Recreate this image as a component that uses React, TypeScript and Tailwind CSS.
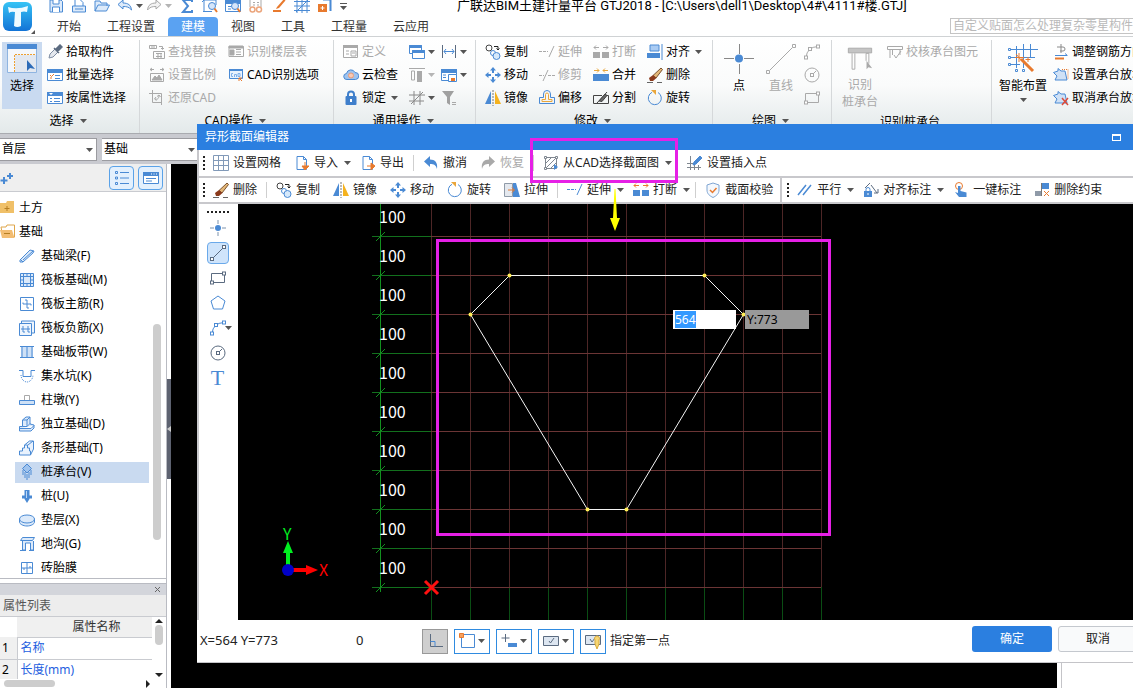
import { FC, ReactNode } from 'react';

const BLUE = '#4a8ad4';
const GRAY = '#a9a9a9';
const DARK = '#5b6b80';
const ORANGE = '#e87a2e';

//Drawings that more than one icon shares
const magnifier = (
    <g fill="none">
        <circle cx="10" cy="8" r="3.5" stroke={BLUE} fill="#d6e6fa" />
        <path d="M12.5 10.5L15 14" stroke={ORANGE} strokeWidth="2" />
    </g>
);
const page = <path d="M3 1.5h6.5l3 3v10h-9.5z M9.5 1.5v3h3" fill="#fff" stroke={BLUE} />;
const extend = (c: string) => (
    <g fill="none" stroke={c}>
        <path d="M0 7.5h9" strokeDasharray="3 1" />
        <path d="M10 13L15 2" />
    </g>
);
const breakBars = (c: string, a: string) => (
    <g>
        <path d="M0 8h7v6H0z M9 8h7v6H9z" fill={c} />
        <path d="M1 3.5h5 M3 1.5L1 3.5l2 2 M10 3.5h5 M13 1.5l2 2-2 2" fill="none" stroke={a} />
    </g>
);
const node = (x: number, y: number, c: string) => (
    <rect x={x - 1.5} y={y - 1.5} width="3" height="3" fill="#fff" stroke={c} />
);
const arc = (c: string) => (
    <g fill="none" stroke={c}>
        <path d="M2 13.5Q3 3 14 2.5" />
        {node(2, 13.5, c)}
        {node(6, 5, c)}
        {node(14, 2.5, c)}
    </g>
);
const circle = (c: string) => (
    <g fill="none" stroke={c}>
        <circle cx="8" cy="8" r="7" />
        <path d="M9 7l3-3" />
        {node(8, 8, c)}
    </g>
);
const rect = (c: string) => (
    <g fill="none" stroke={c}>
        <path d="M1.5 3.5h13v9h-13z" />
        {node(2, 12.5, c)}
        {node(14, 3.5, c)}
    </g>
);
const line = (c: string) => (
    <g fill="none" stroke={c}>
        <path d="M2 14L14 2" />
        {node(2, 14, c)}
        {node(14, 2, c)}
    </g>
);
const windowShape = (c: string) => (
    <g>
        <path d="M.5 2.5h15v11H.5z" fill="#fff" stroke={c} />
        <path d="M0 2h16v4H0z" fill={c} />
    </g>
);
const slope = (
    <path d="M.5 5.5L5 4V1.500l3 2.500h4l2 9H2l2-4z" fill="#cfe1f6" stroke={BLUE} />
);

const icons: Record<string, ReactNode> = {
    save: (
        <g fill="#dceafa" stroke={BLUE}>
            <path d="M2 2h11l1.500 1.500V14H2z" />
            <path d="M5 2v4h6V2 M4.500 14V9h7v5" fill="#fff" />
        </g>
    ),
    file: (
        <g fill="#fff" stroke={BLUE}>
            <path d="M4 8V1.500h5l3 3V8" />
            <path d="M1.500 8h13v6h-13z" fill="#dceafa" />
            <path d="M4 11h8" />
        </g>
    ),
    open: <path d="M1 13V3h5l1 2h6v3 M1 13l3-6h11.500l-3 6z" fill="#dceafa" stroke={BLUE} />,
    undoOutline: <path d="M1 6.500L6 2v3c5 0 8 2 8.500 7C12 9 10 8.500 6 8.500V11z" fill="#dceafa" stroke={BLUE} />,
    redoOutline: <path d="M15 6.500L10 2v3c-5 0-8 2-8.500 7C4 9 6 8.500 10 8.500V11z" fill="#f3f3f3" stroke={GRAY} />,
    sigma: <path d="M13 4V2H4l5 6-5 6h9v-2" fill="none" stroke={BLUE} strokeWidth="2" />,
    preview: (
        <g>
            <path d="M2 13.500V2h12v5 M1 13.500h9 M2 2L0 4" fill="none" stroke={BLUE} />
            {magnifier}
        </g>
    ),
    find: (
        <g>
            {windowShape(BLUE)}
            <path d="M3 8.500h3 M3 11h3" stroke={BLUE} />
            {magnifier}
        </g>
    ),
    link: (
        <g fill="none" stroke={GRAY}>
            <path d="M2 9V1.500h11V9 M5 4.500h2 M9 4.500h2 M5 7h2 M9 7h2" />
            <circle cx="4.500" cy="11.500" r="2.500" stroke="#eba57c" strokeWidth="1.500" />
            <circle cx="11" cy="11.500" r="2.500" stroke="#eba57c" strokeWidth="1.500" />
        </g>
    ),
    edit: (
        <g fill="none">
            <path d="M6 9L13 1l1.500 1.500L8 10l-3 1z" fill={ORANGE} />
            <path d="M2 13h8" stroke={ORANGE} strokeWidth="2" />
        </g>
    ),
    hatch: <path d="M3 1v14 M8 1v14 M13 1v14 M0 3.500h16 M0 8h16 M0 12.500h16 M2 14L14 2" fill="none" stroke={BLUE} />,
    addCorner: (
        <g>
            <path d="M6 1.500h7.500V13" fill="none" stroke={BLUE} strokeWidth="2" />
            <path d="M1 6h9v8H1z" fill={ORANGE} />
            <path d="M5.500 8v4 M3.500 10h4" stroke="#fff" />
        </g>
    ),
    dropper: (
        <g>
            <path d="M2 14l1-4 5-5 3 3-5 5z" fill="#e4e8ee" stroke="#7e8da3" />
            <path d="M7 4l5 5 M9 5l4-4 2 2-4 4z" fill={DARK} stroke={DARK} strokeWidth="1.500" />
        </g>
    ),
    batch: (
        <g>
            {windowShape(BLUE)}
            <path d="M3 8l1.500 1.500L7 7 M3 11h2" fill="none" stroke={ORANGE} />
            <path d="M8 8.500h5 M8 11.500h5" stroke={BLUE} />
        </g>
    ),
    property: (
        <g>
            {windowShape(BLUE)}
            <path d="M2 3l2 2 2-2z" fill="#fff" />
            <path d="M3 8.500h2 M3 11.500h2 M7 8.500h6 M7 11.500h6" stroke={BLUE} />
        </g>
    ),
    replace: (
        <g fill="none" stroke={GRAY}>
            <path d="M.5 1.500h7v3h-7z M3 1.500v3 M5 1.500v3 M10 2.500h3.500v2.500 M12 4l1.500 1.500L15 4 M4.500 7.500h11v7h-11z" />
            <path d="M7 9.500h6 M7 12.500h6 M9 9v5 M12 9v5" />
        </g>
    ),
    scale: (
        <g fill="none" stroke={GRAY}>
            <path d="M1 2.500h4 M11 2.500h4 M3 1L1 2.500 3 4 M13 1l2 1.500L13 4 M1.500 6.500h13v8h-13z" />
            <path d="M3 13l3-4 2 2 2-3 3 5z" fill={GRAY} />
        </g>
    ),
    restore: (
        <path d="M3.500 0v12.500H12 M0 3.500h12.500V15 M6 9c3 1 4-1 4-4 M8 6.500L10 5l1.500 2 M7 7L5.500 9l2 1.500" fill="none" stroke={GRAY} />
    ),
    floors: (
        <g fill="none" stroke={GRAY}>
            <path d="M1 2.500h14.500v10H1z M8 5.500h5 M8 8h5 M8 10.500h5" />
            <path d="M1 2h14v2H1z M2 6h4v5H2z" fill={GRAY} />
        </g>
    ),
    cad: (
        <g>
            <path d="M1.500 2.500h13v9h-13z" fill="#e9f2fd" stroke={BLUE} />
            <path d="M1 2h14v2H1z" fill={BLUE} />
            <path d="M5 6.500H3.500v3H5 M6.500 10V7.500h2V10 M10 6.500v3h2v-3z" fill="none" stroke="#7fb0ea" />
            <path d="M11 11l3 3 M11 14v-3h3" stroke={ORANGE} fill="none" />
        </g>
    ),
    define: (
        <g>
            <path d="M.5 1.500h14v12H.5z" fill="#fff" stroke={GRAY} />
            <path d="M0 1h15v3H0z" fill={GRAY} />
            <path d="M3 7h3 M3 10h3 M8 7h5v5H8z M9 9h3" stroke={GRAY} fill="none" />
        </g>
    ),
    cloud: (
        <g>
            <path d="M4 12.500a3 3 0 0 1-.5-6 4.500 4.500 0 0 1 8.500-1 3.500 3.500 0 0 1 .5 7z" fill="#9fc3ee" stroke={BLUE} />
            <circle cx="8" cy="8.500" r="2.500" fill="#f7c9b4" stroke="#e79a78" />
        </g>
    ),
    lock: (
        <g>
            <path d="M5 7V4.500a3 3 0 0 1 6 0V7" fill="none" stroke="#3f7fcb" strokeWidth="2" />
            <rect x="2.500" y="6" width="11" height="9" rx="1" fill="#3f7fcb" />
            <path d="M8 9v3" stroke="#fff" strokeWidth="2" />
        </g>
    ),
    stack: (
        <g stroke={BLUE} fill="#fff">
            <path d="M.5 1.500h12v8H.5z" />
            <path d="M.5 1.500h12v2H.5z" fill={BLUE} />
            <path d="M3.500 6.500h12v8h-12z" />
            <path d="M3.500 6.500h12v2h-12z" fill={BLUE} />
        </g>
    ),
    columns: (
        <g>
            <path d="M0 1.500h16 M2.500 4v9h3V4z" stroke={GRAY} fill="none" />
            <path d="M8 4h5v11H8z" fill={GRAY} />
        </g>
    ),
    crossHatch: <path d="M5 1v14 M0 5h16 M11 1v14 M0 11h15 M2 14L14 2" fill="none" stroke="#8a8a8a" />,
    width: (
        <g fill="none" stroke={BLUE}>
            <path d="M1.500 1v13 M14.500 1v13" stroke={DARK} />
            <path d="M3 7.500h10 M5 5L3 7.500 5 10 M11 5l2 2.500-2 2.500" />
        </g>
    ),
    layers: (
        <g>
            {windowShape(BLUE)}
            <path d="M2 8h3 M2 10.500h3" stroke={BLUE} />
            <path d="M7.500 7.500h8v7h-8z" fill="#fff" stroke={BLUE} />
            <path d="M10 11h4v3h-4z" fill={ORANGE} />
        </g>
    ),
    filter: (
        <g>
            <path d="M1 1h12L9 7v8l-3-2V7z" fill="#a0a0a0" />
            <path d="M11 12.500h4 M11 14.500h4" stroke={GRAY} />
        </g>
    ),
    copy: (
        <g fill="none">
            <circle cx="4" cy="4" r="3" stroke="#444" />
            <path d="M9 2.500h4v3 M11.500 4.500L13 6l1.500-1.500" stroke="#222" />
            <circle cx="8" cy="9" r="2.500" stroke={BLUE} />
            <circle cx="11.500" cy="12" r="3.500" fill="#d6e9fb" stroke={BLUE} />
        </g>
    ),
    move: (
        <g fill={BLUE}>
            <path d="M8 0l3 3.500H5z M8 16l3-3.500H5z M0 8l3.500-3v6z M16 8l-3.500-3v6z" />
            <path d="M8 3v3 M8 10v3 M3 8h3 M10 8h3" stroke={BLUE} strokeWidth="2" />
        </g>
    ),
    mirror: (
        <g>
            <path d="M6 1v13H0z" fill={BLUE} />
            <path d="M10 1v13h6z" fill="#f5b21e" />
            <path d="M8 0v16" stroke="#777" strokeDasharray="2 1" />
        </g>
    ),
    extendGray: extend(GRAY),
    extend: extend(BLUE),
    trim: (
        <g fill="none" stroke={GRAY}>
            <path d="M0 8.500h5 M9 8.500h7" strokeDasharray="3 1" />
            <path d="M4 14L9 3" />
        </g>
    ),
    offset: (
        <g fill="none">
            <path d="M4.500 7.500V4a3.500 3.500 0 0 1 7 0v3.500h4v6H.5v-6z" stroke={BLUE} />
            <path d="M6.500 9.500V4.500a1.500 1.500 0 0 1 3 0v5h3.500v2H3v-2z" stroke="#e9a63b" />
        </g>
    ),
    breakGray: breakBars(GRAY, GRAY),
    breakBlue: breakBars(BLUE, ORANGE),
    merge: (
        <g>
            <path d="M0 7h16v7H0z" fill={BLUE} />
            <path d="M1 3.500h5 M4 1.500l2 2-2 2 M10 3.500h5 M12 1.500l-2 2 2 2" fill="none" stroke="#e9a63b" />
        </g>
    ),
    split: (
        <g fill="none" stroke="#444">
            <path d="M9 5.500H.5v8h15v-8H13 M4 13l10-11" />
            <path d="M6 11l6-7 2 1.500-5 6z" fill="#666" />
        </g>
    ),
    align: (
        <g>
            <path d="M3 1h9v6H3z" fill="#a9cbf3" stroke={BLUE} />
            <path d="M0 9h13v5H0z" fill={BLUE} />
            <path d="M15 0v16" stroke={BLUE} />
        </g>
    ),
    erase: (
        <g>
            <path d="M0 15.500h6 M10 15.500h5" stroke="#666" />
            <path d="M14 1l1.500 1.500L9 11l-3-2.500z" fill="#e4b878" stroke="#7a5230" />
            <path d="M6 8l3.500 3L6 14H3l-1-3z" fill="#8b3a1c" />
        </g>
    ),
    rotate: (
        <g fill="none">
            <path d="M11 2.500a6.500 6.500 0 1 1-6-.2" stroke={BLUE} />
            <path d="M4 0h5v5z" fill="#e9a63b" />
        </g>
    ),
    pileTable: (
        <g fill="none" stroke={GRAY}>
            <path d="M.5 2.500h15v3H.5z M3 6v8 M5.500 6v5 M13 6v5" />
            <path d="M7 11l2 3 5-7" />
        </g>
    ),
    rebarDir: (
        <g fill="none">
            <path d="M8 0v9 M4 3h6a2 2 0 0 1 0 4H7" stroke="#8a8a8a" />
            <path d="M2 11.500h12 M12 9.500l2.500 2" stroke={BLUE} />
            <path d="M2 14.500h9" stroke={ORANGE} strokeWidth="2" />
        </g>
    ),
    slopeSet: (
        <g>
            {slope}
            <path d="M9 2.500h6v10" fill="none" stroke={ORANGE} strokeDasharray="1 1" />
        </g>
    ),
    slopeCancel: (
        <g>
            {slope}
            <path d="M9 8l6 7 M15 8l-6 7" stroke="#dd4b39" strokeWidth="1.500" />
        </g>
    ),
    arcGray: arc(GRAY),
    circleGray: circle(GRAY),
    rectGray: rect(GRAY),
    arc: arc(BLUE),
    circle: circle(DARK),
    rect: rect(DARK),
    line: line(DARK),
    point: (
        <g>
            <path d="M8 0v4 M8 12v4 M0 8h4 M12 8h4" stroke="#7d93ad" />
            <circle cx="8" cy="8" r="3" fill={BLUE} />
        </g>
    ),
    polygon: <path d="M8 1l7 5-2.500 8h-9L1 6z" fill="none" stroke={BLUE} />,
    grid: <path d="M.5.5h15v15H.5z M5.500.5v15 M10.500.5v15 M.5 5.500h15 M.5 10.500h15" fill="none" stroke="#8199b8" />,
    importFile: (
        <g>
            {page}
            <path d="M11 7v5 M8 11l3 4 4-4z" fill={ORANGE} stroke={ORANGE} />
        </g>
    ),
    exportFile: (
        <g>
            {page}
            <path d="M7 11h5 M11 8l4 3-4 4z" fill={ORANGE} stroke={ORANGE} />
        </g>
    ),
    undo: <path d="M1 6.500L7 1v3.500c5 0 8 3 7 9.500-1-4-3-5-7-5V12z" fill={BLUE} />,
    redo: <path d="M15 6.500L9 1v3.500c-5 0-8 3-7 9.500 1-4 3-5 7-5V12z" fill={GRAY} />,
    cadSelect: (
        <g stroke="#7f8790" fill="none">
            <path d="M2.500 2.500h11v11h-11z M3 8l5-5 M3 13L13 3 M8 13l5-5" />
            <path d="M1.500 1.500h2v2h-2z M12.500 1.500h2v2h-2z M1.500 12.500h2v2h-2z" fill="#fff" />
            <path d="M11 9v6l4-3z" fill={BLUE} stroke="none" />
        </g>
    ),
    insertPoint: (
        <g fill="none" stroke="#7f8790">
            <path d="M3.500 1v14 M0 12.500h14 M0 8.500h6 M7.500 9v6 M11.500 10v5" />
            <path d="M7 7l6-6 2 2-6 6-3 1z" fill={BLUE} stroke={BLUE} />
        </g>
    ),
    stretch: (
        <g>
            <path d="M.5 1.500h8v13h-8z" fill="#e4e8ee" stroke="#8f9aa8" />
            <path d="M9 1h3l4 14H9z" fill={BLUE} />
            <path d="M4 8h6 M8 5.500L10.500 8 8 10.500" stroke={ORANGE} fill="none" />
        </g>
    ),
    shield: (
        <g fill="none">
            <path d="M8 1l6 2v5c0 4-3 6-6 7.500C5 14 2 12 2 8V3z" stroke="#7fa5d3" fill="#f4f8fd" />
            <path d="M5 8l2.500 2.500L11.500 6" stroke={ORANGE} strokeWidth="1.500" />
        </g>
    ),
    parallel: <path d="M1 13L9 3 M6 13l8-10" fill="none" stroke={BLUE} strokeWidth="1.500" />,
    alignMark: (
        <g fill="none" stroke={DARK}>
            <path d="M2 6l5-5 M8 3l6 8 M11 11h4V7" />
            <path d="M3 9V7.500a2 2 0 0 1 4 0V9" stroke={BLUE} />
            <path d="M1 9h8v6H1z" fill={BLUE} stroke="none" />
            <path d="M5 11v2" stroke="#fff" />
        </g>
    ),
    touch: (
        <g>
            <circle cx="6" cy="4" r="3.500" fill="none" stroke={ORANGE} />
            <path d="M5 4h2.500v5l6 1.500V15H6l-4-5 3 1z" fill={BLUE} />
        </g>
    ),
    removeConstraint: (
        <g>
            <path d="M1 9h6v5H1z" fill="#8f9aa8" />
            <path d="M8 1h7v6H8z" fill={BLUE} />
            <path d="M7.500 1v13" stroke="#777" />
            <path d="M10 9l5 5 M15 9l-5 5" stroke={ORANGE} />
        </g>
    ),
    beam: <path d="M1 12L11 2l4 1-1 2L4 14H1z M2 12l2 2 M4 12L14 3" fill="#dceafa" stroke={BLUE} />,
    raft: <path d="M1.500 1.500h13v13h-13z M4.500 4.500h7v7h-7z M1 4.500h14 M1 8h3 M12 8h3 M1 11.500h14 M4.500 1v14 M8 1v3 M8 12v3 M11.500 1v14" fill="#dceafa" stroke={BLUE} />,
    raftMain: <path d="M1.500 1.500h13v13h-13z M8 4v8 M4 8h8 M6 4h2 M8 12h2 M4 8v-1.500 M12 8v1.500" fill="#fff" stroke={BLUE} />,
    raftNeg: <path d="M.5 3.500h12v12H.5z M2.500 3V1h13v12H13 M4 6v6 M9 6v6 M2 9h9 M4 12h2 M9 12h2" fill="#eef5fd" stroke={BLUE} />,
    strip: (
        <g>
            <path d="M2 3h12v10H2z" fill="#cfe1f6" />
            <path d="M1 2.500h14 M1 13.500h14 M3 3v10 M8 3v10 M13 3v10" stroke={BLUE} fill="none" />
        </g>
    ),
    pit: (
        <g fill="none" stroke={BLUE}>
            <path d="M0 2.500h4v6h8v-6h4" />
            <path d="M2 7c0 4 3 7 6 7s6-3 6-7" strokeDasharray="1 1" />
        </g>
    ),
    pier: (
        <g>
            <path d="M5.500 8V3.500h5V8" fill="#fff" stroke={GRAY} />
            <path d="M.5 8.500h15v4H.5z" fill="#cfe1f6" stroke={BLUE} />
        </g>
    ),
    footing: <path d="M.5 10.500h3V4L7 1h4v7l4 1v3l-3 3H.5z M3.500 10.500H8l3-3 M8 10.500V4l3-3 M3.500 4H8 M.5 12.500H12l3-3" fill="#dceafa" stroke={BLUE} />,
    stripFooting: <path d="M.5 15v-4h3V8h2V5l5-4h4v8l-3 6z M5.500 5h3v3h2v3h1v4 M9 5l5-4" fill="#e9f2fd" stroke={BLUE} />,
    pileCap: (
        <g stroke={BLUE}>
            <path d="M4 6v5 M8 10v6 M12 6v5 M6 8v6 M10 8v6" fill="none" />
            <path d="M8 0l4.500 4.500L8 9 3.500 4.500z" fill="#9fc3ee" />
        </g>
    ),
    pile: (
        <g fill={BLUE}>
            <path d="M5.500 2h5v9L8 15l-2.500-4z" />
            <path d="M3 9h10" stroke={BLUE} strokeWidth="3" />
            <path d="M7.500 3v7" stroke="#bcd7f5" />
        </g>
    ),
    cushion: (
        <g fill="#dceafa" stroke={BLUE}>
            <path d="M.5 7v3c0 2 3.500 4 7.500 4s7.500-2 7.500-4V7z" />
            <ellipse cx="8" cy="7" rx="7.500" ry="4" />
        </g>
    ),
    trench: <path d="M3.500 1.500h12l-2 3H1.500z M3.500 5v9h3V7h5v7h3V5 M1 14.500h6 M10 14.500h5" fill="#dceafa" stroke={BLUE} />,
    brickMold: <path d="M2.500 2.500h11v11h-11z M8 2.500v11 M2 8h12 M5 8v2 M11 6v2" fill="#fff" stroke={BLUE} />,
    folderClosed: (
        <g>
            <path d="M0 3h6l1-2h7v12H0z" fill="#f0c068" />
            <path d="M7 6v5 M4.500 8.500h5" stroke="#b67e22" />
        </g>
    ),
    folderOpen: (
        <g>
            <path d="M1 3h5l1-2h7.500v12H3z" fill="#fff" stroke="#dfa64a" />
            <path d="M0 6h12l2.500 8H2z" fill="#f3bd72" />
            <path d="M4 9.500h6" stroke="#b67e22" />
        </g>
    ),
    listView: (
        <g stroke={BLUE} fill="none">
            <path d="M1.500 1.500h2v2h-2z M1.500 7h2v2h-2z M1.500 12.500h2v2h-2z" />
            <path d="M6 2.500h9 M6 8h9 M6 13.500h9" />
        </g>
    ),
    cardView: (
        <g>
            {windowShape(BLUE)}
            <path d="M8 4h1 M10.500 4h1 M13 4h1" stroke="#fff" />
            <path d="M3 8.500h10 M3 11h6" stroke={BLUE} />
        </g>
    ),
    addPair: <path d="M4 7v7 M.5 10.500h7 M10 3v6 M7 6h6" stroke={BLUE} strokeWidth="2" fill="none" />,
    ortho: (
        <g fill="none">
            <path d="M3.500 1v12.500H16" stroke={DARK} />
            <path d="M3.500 8.500H8v5" stroke={BLUE} />
        </g>
    ),
    snapRect: (
        <g>
            <path d="M2.500 1.500h13v13h-13z" fill="#fff" stroke={BLUE} />
            <path d="M.5.5h4v4h-4z" fill="#f5a05f" stroke={ORANGE} />
        </g>
    ),
    snapPlus: (
        <g>
            <path d="M4.500 1v8 M.5 5h8" stroke={DARK} />
            <path d="M7 10h9v4H7z" fill={BLUE} />
        </g>
    ),
    snapCheck: (
        <g fill="none">
            <path d="M.5 3.500h15v9H.5z" fill="#dde6f1" stroke={DARK} />
            <path d="M6 8l1.500 2L11 5" stroke={DARK} />
        </g>
    ),
    snapHint: (
        <g fill="none">
            <path d="M.5 2.500h15v9H.5z" fill="#dde6f1" stroke={DARK} />
            <path d="M5 6l2 3 3-4" stroke={DARK} />
            <path d="M10 7a2.500 2.500 0 1 1 4 0v4l-2 5-2-5z" fill="#f7d774" stroke="#d9a93a" />
        </g>
    ),
};

const Icon: FC<{ name: string }> = ({ name }) => (
    <svg viewBox="0 0 16 16" className="size-4 shrink-0" aria-hidden="true">
        {icons[name]}
    </svg>
);

const Caret: FC<{ muted?: boolean }> = ({ muted }) => (
    <svg viewBox="0 0 7 4" className="h-1 w-[7px] shrink-0" aria-hidden="true">
        <path d="M0 0h7L3.500 4z" fill={muted ? '#b5b5b5' : '#555'} />
    </svg>
);

interface ItemProps {
    icon: string;
    label?: string;
    disabled?: boolean;
    caret?: boolean;
}

const RibbonItem: FC<ItemProps> = ({ icon, label, disabled, caret }) => (
    <button
        disabled={disabled}
        aria-label={label ?? icon}
        className="flex h-[23px] items-center gap-[3px] whitespace-nowrap text-black disabled:text-[#a9a9a9]"
    >
        <Icon name={icon} />
        {label && <span className="mr-[2px]">{label}</span>}
        {caret && <Caret muted={disabled} />}
    </button>
);

const Column: FC<{ items: ItemProps[] }> = ({ items }) => (
    <div className="flex flex-col items-start">
        {items.map((item) => (
            <RibbonItem key={item.icon} {...item} />
        ))}
    </div>
);

interface GroupProps {
    title?: string;
    caret?: boolean;
    className: string;
    children: ReactNode;
}

const Group: FC<GroupProps> = ({ title, caret, className, children }) => (
    <section className={`flex shrink-0 flex-col border-r border-[#d5d8da] ${className}`}>
        <div className="flex h-[70px]">{children}</div>
        <div className="flex h-6 items-center justify-center gap-[6px] pr-[3px] text-black">
            <span>{title}</span>
            {caret && <Caret />}
        </div>
    </section>
);

const tabs = ['开始', '工程设置', '建模', '视图', '工具', '工程量', '云应用'];

const Header: FC = () => (
    <header className="flex h-[37px] shrink-0 border-b border-[#cfd2d4] bg-white">
        <div className="flex w-11 shrink-0 items-end">
            <svg viewBox="0 0 40 37" className="h-[37px] w-10" aria-label="GTJ">
                <defs>
                    <linearGradient id="logo" x1="0" y1="0" x2="0" y2="1">
                        <stop offset="0" stopColor="#36c3f5" />
                        <stop offset="1" stopColor="#1273d6" />
                    </linearGradient>
                </defs>
                <rect x="3" y="3" width="29" height="29" rx="6" fill="url(#logo)" />
                <path d="M8 8q9 3 20-1l-1 6q-3-1-6 0v14q-4 2-7 0l1-14q-4-1-6 1z" fill="#eefaff" />
                <path d="M35 31v4h-4z" fill="#555" />
            </svg>
        </div>
        <div className="flex min-w-0 grow flex-col justify-between">
            <div className="flex h-3 items-center">
                <div className="flex w-[413px] shrink-0 items-center gap-[7px] pl-1">
                    <Icon name="save" />
                    <Icon name="file" />
                    <Icon name="open" />
                    <div className="flex items-center gap-[3px]">
                        <Icon name="undoOutline" />
                        <Caret />
                        <Icon name="redoOutline" />
                        <Caret muted />
                    </div>
                    <Icon name="sigma" />
                    <Icon name="preview" />
                    <Icon name="find" />
                    <Icon name="link" />
                    <Icon name="edit" />
                    <Icon name="hatch" />
                    <Icon name="addCorner" />
                    <div className="flex flex-col gap-[2px]">
                        <div className="h-px w-[7px] bg-[#555]" />
                        <Caret />
                    </div>
                </div>
                <h1 className="whitespace-nowrap font-[Roboto,'Noto_Sans_CJK_SC',sans-serif] text-[13px] leading-3 text-black">
                    广联达BIM土建计量平台 GTJ2018 - [C:\Users\dell1\Desktop\4#\4111#楼.GTJ]
                </h1>
            </div>
            <div className="flex items-end justify-between">
                <nav className="flex">
                    {tabs.map((tab) => (
                        <button
                            key={tab}
                            className={
                                tab === '建模'
                                    ? 'h-[19px] rounded-t-sm bg-[#5aa2f2] px-[13px] text-white'
                                    : 'h-[19px] px-[13px] text-[#333]'
                            }
                        >
                            {tab}
                        </button>
                    ))}
                </nav>
                <input
                    aria-label="搜索"
                    placeholder="自定义贴面怎么处理复杂零星构件的装修"
                    className="mb-[2px] h-4 w-[183px] border border-r-0 border-[#c4c4c4] pl-[2px] placeholder:text-[#b9b9b9]"
                />
            </div>
        </div>
    </header>
);

const Ribbon: FC = () => (
    <div className="flex h-24 shrink-0 overflow-hidden bg-linear-to-b from-white via-[#fafbfb] to-[#e3e9ea] pt-[3px]">
        <Group title="选择" caret className="w-[140px]">
            <button className="ml-[2px] mt-[2px] flex h-[67px] w-10 flex-col items-center bg-[#c9daf0] pt-[2px] text-black">
                <svg viewBox="0 0 30 30" className="size-[30px]" aria-hidden="true">
                    <path d="M.5.5h29v28H.5z" fill="#f4f7fb" stroke="#8fb4e0" />
                    <path d="M0 0h30v5H0z" fill={BLUE} />
                    <path d="M8 11h21v17H8z" fill="#e3e8f0" />
                    <path d="M7.500 28V10.500H29" fill="none" stroke="#efa02f" strokeDasharray="2 1" />
                    <path d="M20 16v11l3-3 5 1z" fill="#2e6cb8" />
                </svg>
                <span className="mt-1">选择</span>
            </button>
            <div className="ml-[5px]">
                <Column
                    items={[
                        { icon: 'dropper', label: '拾取构件' },
                        { icon: 'batch', label: '批量选择' },
                        { icon: 'property', label: '按属性选择' },
                    ]}
                />
            </div>
        </Group>
        <Group title="CAD操作" caret className="w-[194px]">
            <div className="ml-[9px] flex gap-[10px]">
                <Column
                    items={[
                        { icon: 'replace', label: '查找替换', disabled: true },
                        { icon: 'scale', label: '设置比例', disabled: true },
                        { icon: 'restore', label: '还原CAD', disabled: true },
                    ]}
                />
                <Column
                    items={[
                        { icon: 'floors', label: '识别楼层表', disabled: true },
                        { icon: 'cad', label: 'CAD识别选项' },
                    ]}
                />
            </div>
        </Group>
        <Group title="通用操作" caret className="w-[142px]">
            <div className="ml-[9px] flex gap-[10px]">
                <Column
                    items={[
                        { icon: 'define', label: '定义', disabled: true },
                        { icon: 'cloud', label: '云检查' },
                        { icon: 'lock', label: '锁定', caret: true },
                    ]}
                />
                <div className="-ml-px flex gap-[6px]">
                    <Column
                        items={[
                            { icon: 'stack', caret: true },
                            { icon: 'columns', caret: true, disabled: true },
                            { icon: 'crossHatch', caret: true },
                        ]}
                    />
                    <Column
                        items={[
                            { icon: 'width', caret: true },
                            { icon: 'layers', caret: true },
                            { icon: 'filter', disabled: true },
                        ]}
                    />
                </div>
            </div>
        </Group>
        <Group title="修改" caret className="w-[237px]">
            <div className="ml-[9px] flex gap-[9px]">
                <Column
                    items={[
                        { icon: 'copy', label: '复制' },
                        { icon: 'move', label: '移动' },
                        { icon: 'mirror', label: '镜像' },
                    ]}
                />
                <Column
                    items={[
                        { icon: 'extendGray', label: '延伸', disabled: true },
                        { icon: 'trim', label: '修剪', disabled: true },
                        { icon: 'offset', label: '偏移' },
                    ]}
                />
                <Column
                    items={[
                        { icon: 'breakGray', label: '打断', disabled: true },
                        { icon: 'merge', label: '合并' },
                        { icon: 'split', label: '分割' },
                    ]}
                />
                <Column
                    items={[
                        { icon: 'align', label: '对齐', caret: true },
                        { icon: 'erase', label: '删除' },
                        { icon: 'rotate', label: '旋转' },
                    ]}
                />
            </div>
        </Group>
        <Group title="绘图" caret className="w-[119px]">
            <div className="ml-[11px] flex gap-3">
                <button className="flex flex-col items-center pt-1 text-black">
                    <svg viewBox="0 0 30 30" className="size-[30px]" aria-hidden="true">
                        <path d="M15.500 0v10 M15.500 20v10 M0 14.500h10 M20 14.500h10" stroke="#888" />
                        <circle cx="15" cy="14.500" r="4" fill={BLUE} />
                    </svg>
                    <span className="mt-1">点</span>
                </button>
                <button disabled className="flex flex-col items-center pt-1 text-[#a9a9a9]">
                    <svg viewBox="0 0 30 30" className="size-[30px]" fill="none" stroke={GRAY} aria-hidden="true">
                        <path d="M4 26L26 4" />
                        <path d="M.5 26.500h3v3h-3z M26.500.5h3v3h-3z" />
                    </svg>
                    <span className="mt-1">直线</span>
                </button>
                <div className="-ml-1">
                    <Column
                        items={[
                            { icon: 'arcGray', disabled: true },
                            { icon: 'circleGray', disabled: true },
                            { icon: 'rectGray', disabled: true },
                        ]}
                    />
                </div>
            </div>
        </Group>
        <Group title="识别桩承台" className="w-[160px]">
            <div className="ml-[9px] flex gap-2">
                <button disabled className="flex w-[38px] flex-col items-center pt-1 leading-[17px] text-[#a9a9a9]">
                    <svg viewBox="0 0 30 30" className="size-[30px]" aria-hidden="true">
                        <path d="M2.500 4.500h25v5h-25z" fill="#c4c4c4" stroke={GRAY} />
                        <path d="M6.500 10v17h3V10 M21.500 18v-8h3v11" fill="none" stroke={GRAY} />
                        <path d="M22 18v9l2-2 4 1z" fill={GRAY} />
                    </svg>
                    <span className="mt-1">识别</span>
                    <span className="whitespace-nowrap">桩承台</span>
                </button>
                <Column items={[{ icon: 'pileTable', label: '校核承台图元', disabled: true }]} />
            </div>
        </Group>
        <Group className="w-[220px]">
            <div className="ml-[7px] flex gap-[6px]">
                <button className="flex flex-col items-center pt-1 text-black">
                    <svg viewBox="0 0 30 30" className="size-[30px]" fill="none" aria-hidden="true">
                        <path d="M3 5.500h27 M3 13.500h24 M3 20.500h9 M8.500 2v22 M15.500 0v24 M22.500 0v14" stroke={BLUE} />
                        <path d="M.5 4.500h2v2h-2z M.5 12.500h2v2h-2z M.5 19.500h2v2h-2z M7.500 25.500h2v2h-2z M14.500 25.500h2v2h-2z" stroke={BLUE} />
                        <path d="M13 15l12 12" stroke={ORANGE} strokeWidth="3" />
                        <path d="M11 9v9 M7 13.500h9 M8 10l6 7 M20 13v5 M17.500 15.500h5" stroke={ORANGE} />
                    </svg>
                    <span className="mb-1 mt-1">智能布置</span>
                    <Caret />
                </button>
                <Column
                    items={[
                        { icon: 'rebarDir', label: '调整钢筋方向' },
                        { icon: 'slopeSet', label: '设置承台放坡' },
                        { icon: 'slopeCancel', label: '取消承台放坡' },
                    ]}
                />
            </div>
        </Group>
    </div>
);

interface ComboProps {
    label: string;
    value: string;
}

const Combo: FC<ComboProps> = ({ label, value }) => (
    <div className="relative w-[97px]">
        <select
            aria-label={label}
            className="h-[23px] w-full appearance-none border border-l-0 border-[#9b9ba0] bg-white pl-[2px] text-black"
        >
            <option>{value}</option>
        </select>
        <span className="pointer-events-none absolute right-1 top-[10px] flex">
            <Caret />
        </span>
    </div>
);

const treeItems = [
    { icon: 'beam', label: '基础梁(F)' },
    { icon: 'raft', label: '筏板基础(M)' },
    { icon: 'raftMain', label: '筏板主筋(R)' },
    { icon: 'raftNeg', label: '筏板负筋(X)' },
    { icon: 'strip', label: '基础板带(W)' },
    { icon: 'pit', label: '集水坑(K)' },
    { icon: 'pier', label: '柱墩(Y)' },
    { icon: 'footing', label: '独立基础(D)' },
    { icon: 'stripFooting', label: '条形基础(T)' },
    { icon: 'pileCap', label: '桩承台(V)' },
    { icon: 'pile', label: '桩(U)' },
    { icon: 'cushion', label: '垫层(X)' },
    { icon: 'trench', label: '地沟(G)' },
    { icon: 'brickMold', label: '砖胎膜' },
];

const Sidebar: FC = () => (
    <aside className="flex w-[167px] shrink-0 flex-col border-r border-[#b9bbc2] bg-white text-black">
        <div className="flex h-7 shrink-0 items-center border-b border-[#c9cbd0] bg-[#efefef]">
            <Icon name="addPair" />
            <div className="ml-auto mr-[3px] flex gap-1">
                <button aria-label="列表" className="flex h-6 w-[25px] items-center justify-center rounded-sm border border-[#5aa2e8] bg-[#e3f0fd]">
                    <Icon name="listView" />
                </button>
                <button aria-label="卡片" className="flex h-6 w-[25px] items-center justify-center rounded-sm border border-[#5aa2e8] bg-[#e3f0fd]">
                    <Icon name="cardView" />
                </button>
            </div>
        </div>
        <div className="flex h-[387px] shrink-0 overflow-hidden border-b border-[#b9bbc2] pt-1">
            <ul className="w-[149px]">
                <li className="flex h-6 items-center gap-[3px]">
                    <Icon name="folderClosed" />
                    土方
                </li>
                <li className="flex h-6 items-center gap-[3px]">
                    <Icon name="folderOpen" />
                    基础
                </li>
                {treeItems.map(({ icon, label }) => (
                    <li key={label} className="flex h-6 items-center pl-[15px]">
                        <button
                            className={
                                icon === 'pileCap'
                                    ? 'flex h-[21px] grow items-center gap-[6px] bg-[#c9daf0] pl-1'
                                    : 'flex h-[21px] grow items-center gap-[6px] pl-1'
                            }
                        >
                            <Icon name={icon} />
                            {label}
                        </button>
                    </li>
                ))}
            </ul>
            <div className="ml-1 mt-32 h-[216px] w-2 rounded-full bg-[#cdcdcd]" />
        </div>
        <div className="mt-1 flex h-3 shrink-0 items-center justify-end border-t border-[#b9bbc2] bg-[#d3d5db] pr-[5px]">
            <button aria-label="关闭">
                <svg viewBox="0 0 7 7" className="size-[7px]" aria-hidden="true">
                    <path d="M1 1l5 5 M6 1L1 6" stroke="#666" />
                </svg>
            </button>
        </div>
        <h2 className="h-[22px] shrink-0 border-b border-[#c9cbd0] bg-[#ededed] pl-[3px] leading-[22px] text-[#555]">属性列表</h2>
        <div className="flex h-[62px] shrink-0 overflow-hidden">
            <table className="w-[152px] table-fixed border-collapse text-left">
                <thead>
                    <tr className="h-5">
                        <th className="w-[17px]" />
                        <th className="border-b border-[#c9cbd0] bg-[#f0f0f0] pl-6 text-center font-normal text-[#333]">属性名称</th>
                    </tr>
                </thead>
                <tbody>
                    <tr className="h-[22px]">
                        <td className="border-b border-r border-[#c9cbd0] bg-[#f0f0f0] pl-[2px]">1</td>
                        <td className="border-b border-[#c9cbd0] pl-[3px] text-[#1f5fe0]">名称</td>
                    </tr>
                    <tr className="h-[22px]">
                        <td className="border-r border-[#c9cbd0] bg-[#f0f0f0] pl-[2px]">2</td>
                        <td className="pl-[3px] text-[#1f5fe0]">长度(mm)</td>
                    </tr>
                </tbody>
            </table>
            <div className="flex grow flex-col items-center gap-[2px] py-[2px]">
                <svg viewBox="0 0 8 4" className="h-1 w-2" aria-hidden="true">
                    <path d="M0 4h8L4 0z" fill="#222" />
                </svg>
                <div className="h-5 w-2 rounded-full bg-[#cdcdcd]" />
                <svg viewBox="0 0 8 4" className="mt-auto h-1 w-2" aria-hidden="true">
                    <path d="M0 0h8L4 4z" fill="#222" />
                </svg>
            </div>
        </div>
        <div className="flex grow items-center justify-between pr-4">
            <div className="ml-1 h-[7px] w-[51px] rounded-full bg-[#cdcdcd]" />
            <svg viewBox="0 0 4 8" className="h-2 w-1" aria-hidden="true">
                <path d="M0 0v8l4-4z" fill="#222" />
            </svg>
        </div>
    </aside>
);

const Grip: FC = () => <div className="ml-1 mr-px h-[14px] w-0 border-l-2 border-dotted border-[#222]" />;
const Separator: FC = () => <div className="mx-[2px] h-4 w-px bg-[#cfcfcf]" />;

const ToolButton: FC<ItemProps> = ({ icon, label, disabled, caret }) => (
    <button
        disabled={disabled}
        className={
            caret
                ? 'flex h-6 shrink-0 items-center gap-[6px] whitespace-nowrap pl-[6px] pr-[2px] text-[#222]'
                : 'flex h-6 shrink-0 items-center whitespace-nowrap px-[6px] text-[#222] disabled:text-[#a9a9a9]'
        }
    >
        <span className="flex items-center gap-1">
            <Icon name={icon} />
            {label}
        </span>
        {caret && <Caret />}
    </button>
);

const drawTools = [
    { icon: 'point', label: '点' },
    { icon: 'line', label: '直线' },
    { icon: 'rect', label: '矩形' },
    { icon: 'polygon', label: '多边形' },
    { icon: 'arc', label: '弧' },
    { icon: 'circle', label: '圆' },
];

//Grid spacing of 100 in model units, in pixels
const STEP = 39;
const LEFT = 193;
const BOTTOM = 383;
const RIGHT = LEFT + STEP * 10;

const cols = Array.from({ length: 11 }, (_, i) => LEFT + i * STEP);
const rows = Array.from({ length: 10 }, (_, i) => BOTTOM - i * STEP);
const section = [
    [232, 110],
    [271, 71],
    [466, 71],
    [505, 110],
    [388, 305],
    [349, 305],
];

const Drawing: FC = () => (
    <svg viewBox="0 0 895 416" className="h-[416px] w-[895px] shrink-0" fill="none">
        <g shapeRendering="crispEdges">
            {cols.map((x) => (
                <g key={x}>
                    <path d={`M${x}.5 0V${BOTTOM}`} stroke="#4d2626" />
                    <path d={`M${x}.5 ${BOTTOM}V416`} stroke="#0a4d14" />
                </g>
            ))}
            {rows.map((y) => (
                <g key={y}>
                    <path d={`M${LEFT} ${y}.5H${RIGHT}`} stroke="#6b3535" />
                    <path d={`M134 ${y}.5H${LEFT}`} stroke="#12701d" />
                </g>
            ))}
            <path d={`M142.500 0V${BOTTOM + 5}`} stroke="#12901f" />
        </g>
        {rows.map((y) => (
            <g key={y}>
                <path d={`M138 ${y + 5}l9-9`} stroke="#12901f" />
                <text x="141" y={y - 13} fill="#fff" fontSize="16" fontFamily="'Noto Sans CJK SC', sans-serif">
                    100
                </text>
            </g>
        ))}
        <polygon points={section.map((p) => p.join(',')).join(' ')} transform="translate(.5 .5)" stroke="#f4f4f4" />
        {section.map(([x, y]) => (
            <circle key={`${x}-${y}`} cx={x + 0.5} cy={y + 0.5} r="2" fill="#ffee58" />
        ))}
        <path d="M187 377l13 13 M200 377l-13 13" stroke="#ff1010" strokeWidth="3" />
        <path d="M50 366V347" stroke="#00f020" strokeWidth="4" />
        <path d="M50 337l5 12H45z" fill="#00f020" />
        <path d="M50 366h20" stroke="#f00" strokeWidth="4" />
        <path d="M80 366l-12-5v10z" fill="#f00" />
        <circle cx="50" cy="366" r="6" fill="#0000c8" />
        <text x="45" y="336" fill="#00f020" fontSize="16" fontFamily="'Noto Sans CJK SC', sans-serif">
            Y
        </text>
        <text x="81" y="372" fill="#f00" fontSize="16" fontFamily="'Noto Sans CJK SC', sans-serif">
            X
        </text>
        <rect x="199.500" y="36.500" width="392" height="294" stroke="#e620e6" strokeWidth="3" />
    </svg>
);

interface SnapProps {
    icon: string;
    label: string;
    caret?: boolean;
}

const SnapButton: FC<SnapProps> = ({ icon, label, caret }) => (
    <button aria-label={label} className="flex h-[25px] items-center gap-[3px] border border-[#2f8be0] bg-white px-1">
        <Icon name={icon} />
        {caret && <Caret />}
    </button>
);

const SectionEditor: FC = () => (
    <div className="absolute -right-4 left-[197px] top-[124px] flex flex-col border-b border-[#c4c4c8] bg-white">
        <div className="flex h-[26px] items-center justify-between bg-[#2b7fe0] pl-2 pr-7 text-white">
            <h2>异形截面编辑器</h2>
            <button aria-label="最大化" className="h-[7px] w-[9px] border border-t-2 border-white" />
        </div>
        <div className="flex h-7 items-center gap-px border-b-2 border-l-2 border-[#c8c8cc] text-[#222]">
            <Grip />
            <ToolButton icon="grid" label="设置网格" />
            <ToolButton icon="importFile" label="导入" caret />
            <ToolButton icon="exportFile" label="导出" />
            <Separator />
            <ToolButton icon="undo" label="撤消" />
            <ToolButton icon="redo" label="恢复" disabled />
            <Separator />
            <ToolButton icon="cadSelect" label="从CAD选择截面图" caret />
            <Separator />
            <ToolButton icon="insertPoint" label="设置插入点" />
        </div>
        <div className="flex h-[26px] items-center gap-px border-b-2 border-l-2 border-[#c8c8cc] text-[#222]">
            <Grip />
            <ToolButton icon="erase" label="删除" />
            <Separator />
            <ToolButton icon="copy" label="复制" />
            <ToolButton icon="mirror" label="镜像" />
            <ToolButton icon="move" label="移动" />
            <ToolButton icon="rotate" label="旋转" />
            <ToolButton icon="stretch" label="拉伸" />
            <Separator />
            <ToolButton icon="extend" label="延伸" caret />
            <ToolButton icon="breakBlue" label="打断" caret />
            <Separator />
            <ToolButton icon="shield" label="截面校验" />
            <div className="h-full border-l-2 border-[#c8c8cc]" />
            <Grip />
            <ToolButton icon="parallel" label="平行" caret />
            <ToolButton icon="alignMark" label="对齐标注" caret />
            <ToolButton icon="touch" label="一键标注" />
            <ToolButton icon="removeConstraint" label="删除约束" />
        </div>
        <div className="flex overflow-hidden">
            <div className="flex w-[41px] shrink-0 flex-col items-center border-l-2 border-[#c8c8cc] pr-[2px] pt-[7px]">
                <div className="mb-[2px] w-[22px] border-t-2 border-dotted border-[#222]" />
                {drawTools.map(({ icon, label }) => (
                    <div key={icon} className="relative flex h-[25px] items-center">
                        <button
                            aria-label={label}
                            className={
                                icon === 'line'
                                    ? 'flex size-[22px] items-center justify-center rounded-sm border border-[#6aa9ea] bg-[#cfe4fb]'
                                    : 'flex size-[22px] items-center justify-center'
                            }
                        >
                            <Icon name={icon} />
                        </button>
                        {icon === 'arc' && (
                            <span className="absolute left-full top-[11px] -ml-1 flex">
                                <Caret />
                            </span>
                        )}
                    </div>
                ))}
                <button className="h-[25px] font-['Liberation_Serif',serif] text-[22px] leading-[25px] text-[#4a8ad4]">T</button>
            </div>
            <div className="relative flex grow overflow-hidden bg-black">
                <Drawing />
                <input
                    aria-label="X"
                    defaultValue="564"
                    autoFocus
                    onFocus={(e) => e.target.select()}
                    className="absolute left-[435px] top-[106px] h-[19px] w-[63px] bg-white px-[2px] text-black caret-transparent outline-none selection:bg-[#3399ff] selection:text-white"
                />
                <output className="absolute left-[507px] top-[106px] h-[19px] w-16 bg-[#999] px-[2px] leading-[19px] text-black">
                    Y:773
                </output>
            </div>
        </div>
        <div className="flex h-[42px] items-center pl-[3px] pr-[11px] text-[#222]">
            <span className="w-[156px] text-[13px]">X=564 Y=773</span>
            <span className="w-[66px] text-[13px]">0</span>
            <div className="flex gap-[6px]">
                <button aria-label="正交" className="flex h-[25px] items-center border border-[#999] bg-[#cfcfcf] px-1">
                    <Icon name="ortho" />
                </button>
                <SnapButton icon="snapRect" label="捕捉" caret />
                <SnapButton icon="snapPlus" label="动态输入" caret />
                <SnapButton icon="snapCheck" label="选项" caret />
                <SnapButton icon="snapHint" label="提示" />
            </div>
            <span className="ml-1">指定第一点</span>
            <div className="mb-1 ml-auto flex gap-[6px]">
                <button className="h-[26px] w-20 rounded-[3px] bg-[#2b7fe0] text-white">确定</button>
                <button className="h-[26px] w-20 rounded-[3px] border border-[#c4c8ce] bg-[#f9fafb]">取消</button>
            </div>
        </div>
        <div className="pointer-events-none absolute left-[333px] top-[14px] h-[45px] w-[148px] border-3 border-[#e620e6]" />
        <svg viewBox="0 0 12 42" className="pointer-events-none absolute left-[412px] top-[65px] h-[42px] w-3" aria-hidden="true">
            <path d="M5.500 0h1l1.500 29h3L6 42 1 29h3z" fill="#ff0" />
        </svg>
    </div>
);

export default function App() {
    return (
        <div className="relative flex h-screen flex-col overflow-hidden bg-white font-['Noto_Sans','Noto_Sans_CJK_SC',sans-serif] text-xs">
            <Header />
            <Ribbon />
            <div className="flex h-[31px] shrink-0 items-center gap-[5px] border-t border-[#a9abb0] bg-[#c9cad0]">
                <Combo label="楼层" value="首层" />
                <Combo label="构件类型" value="基础" />
            </div>
            <div className="flex min-h-0 grow">
                <Sidebar />
                <div className="flex w-1 shrink-0 flex-col bg-white pt-[215px]">
                    <div className="flex h-[100px] items-center bg-[#5d6270]">
                        <svg viewBox="0 0 4 6" className="h-[6px] w-1" aria-hidden="true">
                            <path d="M4 0v6L0 3z" fill="#ccc" />
                        </svg>
                    </div>
                </div>
                <div className="grow bg-black" />
                <div className="ml-1 w-[72px] border-l border-[#c4c4c8] bg-white" />
            </div>
            <SectionEditor />
        </div>
    );
}
